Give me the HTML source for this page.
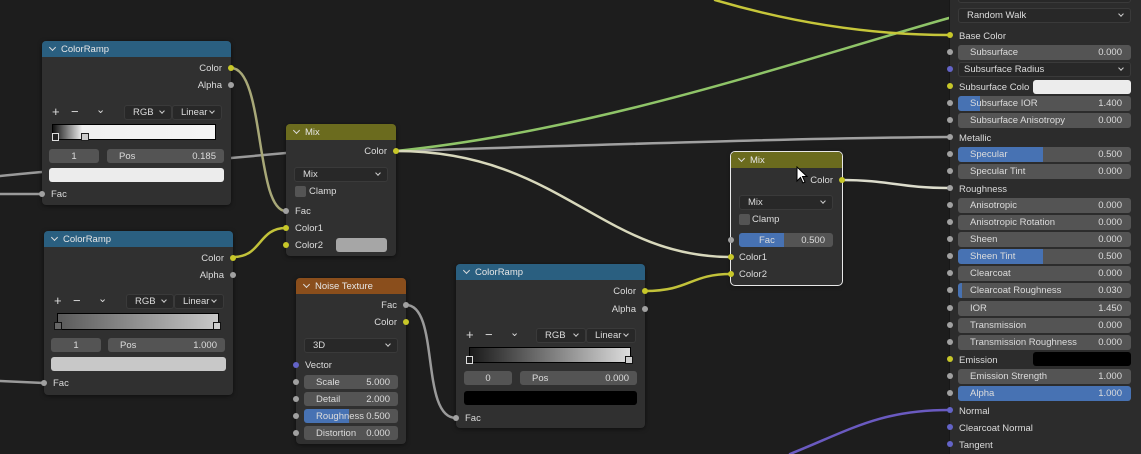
<!DOCTYPE html>
<html><head><meta charset="utf-8"><style>
*{margin:0;padding:0;box-sizing:border-box}
body{width:1141px;height:454px;background:#1d1d1d;position:relative;overflow:hidden;font-family:"Liberation Sans","DejaVu Sans",sans-serif;font-size:9.5px;color:#dcdcdc}
.n{position:absolute;background:#303030;border-radius:4px;box-shadow:0 1px 4px rgba(0,0,0,.5)}
.n>*{position:absolute}
.h{left:0;top:0;right:0;height:16px;border-radius:4px 4px 0 0;line-height:17px;padding-left:19px;color:#e6e6e6}
.h:before{content:"";position:absolute;left:8px;top:4px;width:4px;height:4px;border-right:1.2px solid #ddd;border-bottom:1.2px solid #ddd;transform:rotate(45deg)}
.cr{background:#2a5f80}.mx{background:#6b6b1e}.nz{background:#8a4e1c}
.l{line-height:14px;white-space:nowrap}
.r{text-align:right}
.s{width:6px;height:6px;border-radius:50%;background:#a1a1a1}
.y{background:#c7c729}.p{background:#6363c7}
.f{background:#545454;border-radius:3px;height:14px;line-height:15px;white-space:nowrap;overflow:hidden}
.d{background:#282828;border:1px solid #3a3a3a;border-radius:3px;height:15px;line-height:14px;padding-left:8px}
.d:after{content:"";position:absolute;right:7px;top:3px;width:3px;height:3px;border-right:1px solid #ccc;border-bottom:1px solid #ccc;transform:rotate(45deg)}
.cb{width:11px;height:11px;background:#545454;border-radius:2px}
.pf{position:absolute;left:958px;width:173px;height:15px;background:#545454;border-radius:3px;line-height:16px;padding:0 9px 0 12px;white-space:nowrap;overflow:hidden}
.pf b{font-weight:normal;float:right;position:relative}
.pf span{position:relative}
.pf i{position:absolute;left:0;top:0;bottom:0;background:#4772b3}
.pl{position:absolute;left:959px;line-height:14px}
.ps{position:absolute;left:947px;width:6px;height:6px;border-radius:50%;background:#a1a1a1}
.pm{font-size:13px}
.ch{font-size:11px}
</style></head><body>

<svg width="1141" height="454" style="position:absolute;left:0;top:0" fill="none" stroke-linecap="round">
<path d="M0 176 C20 174 30 173 42 172" stroke="#9a9a9a" stroke-width="2.5"/>
<path d="M0 194 L42 194" stroke="#9a9a9a" stroke-width="2.5"/>
<path d="M0 381 L44 383" stroke="#9a9a9a" stroke-width="2.5"/>
<path d="M231 158 L286 153" stroke="#9a9a9a" stroke-width="2.5"/>
<path d="M231 68 C265 68 255 211 286 211" stroke="#a8a878" stroke-width="2.5"/>
<path d="M233 257 C262 257 258 228 286 228" stroke="#c2c23a" stroke-width="2.5"/>
<path d="M396 151 C600 145 800 138 949 137" stroke="#a0a0a0" stroke-width="2.5"/>
<path d="M396 151 C600 130 800 60 949 18" stroke="#8fc468" stroke-width="2.5"/>
<path d="M715 0 C800 25 880 35 949 35" stroke="#c6c63a" stroke-width="2.5"/>
<path d="M396 151 C560 151 600 257 731 257" stroke="#d8d8bc" stroke-width="2.5"/>
<path d="M841 180 C890 180 900 188 949 188" stroke="#dcdccc" stroke-width="2.5"/>
<path d="M645 291 C690 291 690 274 731 274" stroke="#c2c23a" stroke-width="2.5"/>
<path d="M406 305 C440 305 420 418 456 418" stroke="#9a9a9a" stroke-width="2.5"/>
<path d="M790 454 C850 430 880 410 949 410" stroke="#6a5ac0" stroke-width="2.5"/>
</svg>

<!-- ColorRamp 1 -->
<div class="n" style="left:42px;top:41px;width:189px;height:164px">
<div class="h cr">ColorRamp</div>
<div class="l r" style="right:9px;top:21px">Color</div><div class="s y" style="right:-3px;top:24px"></div>
<div class="l r" style="right:9px;top:38px">Alpha</div><div class="s" style="right:-3px;top:41px"></div>
<div class="l pm" style="left:10px;top:64px">+</div><div class="l pm" style="left:29px;top:64px">−</div><div class="l ch" style="left:54px;top:62px">⌄</div>
<div class="d" style="left:82px;top:64px;width:48px">RGB</div><div class="d" style="left:130px;top:64px;width:50px">Linear</div>
<div style="left:10px;top:83px;width:164px;height:16px;border:1px solid #000;background:linear-gradient(90deg,#111 0%,#f0f0f0 18%,#f4f4f4 100%)"></div>
<div style="left:10px;top:92px;width:7px;height:8px;background:#222;border:1px solid #ddd"></div>
<div style="left:39px;top:92px;width:8px;height:8px;background:#ccc;border:1px solid #222"></div>
<div class="f" style="left:7px;top:108px;width:50px;text-align:center">1</div>
<div class="f" style="left:65px;top:108px;width:117px;padding:0 8px 0 12px">Pos<span style="float:right">0.185</span></div>
<div class="f" style="left:7px;top:127px;width:175px;background:#ececec"></div>
<div class="s" style="left:-3px;top:150px"></div><div class="l" style="left:9px;top:147px">Fac</div>
</div>

<!-- ColorRamp 2 -->
<div class="n" style="left:44px;top:231px;width:189px;height:164px">
<div class="h cr">ColorRamp</div>
<div class="l r" style="right:9px;top:21px">Color</div><div class="s y" style="right:-3px;top:24px"></div>
<div class="l r" style="right:9px;top:38px">Alpha</div><div class="s" style="right:-3px;top:41px"></div>
<div class="l pm" style="left:10px;top:63px">+</div><div class="l pm" style="left:29px;top:63px">−</div><div class="l ch" style="left:54px;top:61px">⌄</div>
<div class="d" style="left:82px;top:63px;width:48px">RGB</div><div class="d" style="left:130px;top:63px;width:50px">Linear</div>
<div style="left:13px;top:82px;width:162px;height:17px;border:1px solid #000;background:linear-gradient(90deg,#5a5a5a,#c8c8c8)"></div>
<div style="left:10px;top:91px;width:8px;height:8px;background:#666;border:1px solid #111"></div>
<div style="left:169px;top:91px;width:8px;height:8px;background:#ccc;border:1px solid #111"></div>
<div class="f" style="left:7px;top:107px;width:50px;text-align:center">1</div>
<div class="f" style="left:64px;top:107px;width:117px;padding:0 8px 0 12px">Pos<span style="float:right">1.000</span></div>
<div class="f" style="left:7px;top:126px;width:175px;background:#c8c8c8"></div>
<div class="s" style="left:-3px;top:149px"></div><div class="l" style="left:9px;top:146px">Fac</div>
</div>

<!-- ColorRamp 3 -->
<div class="n" style="left:456px;top:264px;width:189px;height:164px">
<div class="h cr">ColorRamp</div>
<div class="l r" style="right:9px;top:21px">Color</div><div class="s y" style="right:-3px;top:24px"></div>
<div class="l r" style="right:9px;top:39px">Alpha</div><div class="s" style="right:-3px;top:42px"></div>
<div class="l pm" style="left:10px;top:64px">+</div><div class="l pm" style="left:29px;top:64px">−</div><div class="l ch" style="left:54px;top:62px">⌄</div>
<div class="d" style="left:80px;top:64px;width:50px">RGB</div><div class="d" style="left:130px;top:64px;width:50px">Linear</div>
<div style="left:13px;top:83px;width:162px;height:16px;border:1px solid #000;background:linear-gradient(90deg,#1a1a1a,#dcdcdc)"></div>
<div style="left:10px;top:92px;width:7px;height:8px;background:#222;border:1px solid #ddd"></div>
<div style="left:169px;top:92px;width:8px;height:8px;background:#ccc;border:1px solid #111"></div>
<div class="f" style="left:8px;top:107px;width:48px;text-align:center">0</div>
<div class="f" style="left:64px;top:107px;width:117px;padding:0 8px 0 12px">Pos<span style="float:right">0.000</span></div>
<div class="f" style="left:8px;top:127px;width:173px;background:#000"></div>
<div class="s" style="left:-3px;top:151px"></div><div class="l" style="left:9px;top:148px">Fac</div>
</div>

<!-- Mix 1 -->
<div class="n" style="left:286px;top:124px;width:110px;height:132px">
<div class="h mx">Mix</div>
<div class="l r" style="right:9px;top:21px">Color</div><div class="s y" style="right:-3px;top:24px"></div>
<div class="d" style="left:8px;top:43px;width:94px">Mix</div>
<div class="cb" style="left:9px;top:62px"></div><div class="l" style="left:23px;top:61px">Clamp</div>
<div class="s" style="left:-3px;top:84px"></div><div class="l" style="left:9px;top:81px">Fac</div>
<div class="s y" style="left:-3px;top:101px"></div><div class="l" style="left:9px;top:98px">Color1</div>
<div class="s y" style="left:-3px;top:118px"></div><div class="l" style="left:9px;top:115px">Color2</div>
<div class="f" style="left:50px;top:114px;width:51px;background:#a6a6a6"></div>
</div>

<!-- Noise -->
<div class="n" style="left:296px;top:278px;width:110px;height:166px">
<div class="h nz">Noise Texture</div>
<div class="l r" style="right:9px;top:21px">Fac</div><div class="s" style="right:-3px;top:24px"></div>
<div class="l r" style="right:9px;top:38px">Color</div><div class="s y" style="right:-3px;top:41px"></div>
<div class="d" style="left:8px;top:60px;width:94px">3D</div>
<div class="s p" style="left:-3px;top:84px"></div><div class="l" style="left:9px;top:81px">Vector</div>
<div class="s" style="left:-3px;top:101px"></div><div class="f" style="left:8px;top:97px;width:94px;padding:0 8px 0 12px">Scale<span style="float:right">5.000</span></div>
<div class="s" style="left:-3px;top:118px"></div><div class="f" style="left:8px;top:114px;width:94px;padding:0 8px 0 12px">Detail<span style="float:right">2.000</span></div>
<div class="s" style="left:-3px;top:135px"></div><div class="f" style="left:8px;top:131px;width:94px;padding:0 8px 0 12px;background:linear-gradient(90deg,#4772b3 48%,#545454 48%)">Roughness<span style="float:right">0.500</span></div>
<div class="s" style="left:-3px;top:152px"></div><div class="f" style="left:8px;top:148px;width:94px;padding:0 8px 0 12px">Distortion<span style="float:right">0.000</span></div>
</div>

<!-- Mix 2 -->
<div class="n" style="left:731px;top:152px;width:111px;height:133px;outline:1px solid #e8e8e8">
<div class="h mx">Mix</div>
<div class="l r" style="right:9px;top:22px">Color</div><div class="s y" style="right:-3px;top:25px"></div>
<div class="d" style="left:8px;top:43px;width:94px">Mix</div>
<div class="cb" style="left:8px;top:62px"></div><div class="l" style="left:21px;top:61px">Clamp</div>
<div class="s" style="left:-3px;top:85px"></div><div class="f" style="left:8px;top:81px;width:94px;padding:0 8px 0 20px;background:linear-gradient(90deg,#4772b3 48%,#545454 48%)">Fac<span style="float:right">0.500</span></div>
<div class="s y" style="left:-3px;top:102px"></div><div class="l" style="left:8px;top:99px">Color1</div>
<div class="s y" style="left:-3px;top:119px"></div><div class="l" style="left:8px;top:116px">Color2</div>
</div>
<svg width="14" height="20" style="position:absolute;left:796px;top:166px"><path d="M1 1 L1 15 L4.5 11.5 L7 17 L9 16 L6.5 10.5 L11 10.5 Z" fill="#fff" stroke="#000" stroke-width="1"/></svg>

<!-- Principled panel -->
<div style="position:absolute;left:949px;top:0;width:192px;height:454px;background:#2c2c2c;border-left:1px solid #181818"></div>
<div style="position:absolute;left:958px;top:-6px;width:173px;height:9px;background:#282828;border:1px solid #3a3a3a;border-radius:3px"></div>
<div class="d" style="position:absolute;left:958px;top:8px;width:173px">Random Walk</div>

<div class="ps y" style="top:32px;background:#c7c729"></div><div class="pl" style="top:30px">Base Color</div>
<div class="ps" style="top:49px"></div><div class="pf" style="top:45px"><span>Subsurface</span><b>0.000</b></div>
<div class="ps" style="top:66px;background:#6363c7"></div><div class="d" style="position:absolute;left:958px;top:62px;width:173px;padding-left:5px">Subsurface Radius</div>
<div class="ps" style="top:83px;background:#c7c729"></div><div class="pl" style="top:81px">Subsurface Colo</div><div style="position:absolute;left:1033px;top:80px;width:98px;height:14px;background:#ececec;border-radius:3px"></div>
<div class="ps" style="top:100px"></div><div class="pf" style="top:96px"><i style="width:22px;border-radius:3px 0 0 3px"></i><span>Subsurface IOR</span><b>1.400</b></div>
<div class="ps" style="top:117px"></div><div class="pf" style="top:113px"><span>Subsurface Anisotropy</span><b>0.000</b></div>
<div class="ps" style="top:134px"></div><div class="pl" style="top:132px">Metallic</div>
<div class="ps" style="top:151px"></div><div class="pf" style="top:147px"><i style="width:85px;border-radius:3px 0 0 3px"></i><span>Specular</span><b>0.500</b></div>
<div class="ps" style="top:168px"></div><div class="pf" style="top:164px"><span>Specular Tint</span><b>0.000</b></div>
<div class="ps" style="top:185px"></div><div class="pl" style="top:183px">Roughness</div>
<div class="ps" style="top:202px"></div><div class="pf" style="top:198px"><span>Anisotropic</span><b>0.000</b></div>
<div class="ps" style="top:219px"></div><div class="pf" style="top:215px"><span>Anisotropic Rotation</span><b>0.000</b></div>
<div class="ps" style="top:236px"></div><div class="pf" style="top:232px"><span>Sheen</span><b>0.000</b></div>
<div class="ps" style="top:253px"></div><div class="pf" style="top:249px"><i style="width:85px;border-radius:3px 0 0 3px"></i><span>Sheen Tint</span><b>0.500</b></div>
<div class="ps" style="top:270px"></div><div class="pf" style="top:266px"><span>Clearcoat</span><b>0.000</b></div>
<div class="ps" style="top:287px"></div><div class="pf" style="top:283px"><i style="width:4px;border-radius:3px 0 0 3px"></i><span>Clearcoat Roughness</span><b>0.030</b></div>
<div class="ps" style="top:305px"></div><div class="pf" style="top:301px"><span>IOR</span><b>1.450</b></div>
<div class="ps" style="top:322px"></div><div class="pf" style="top:318px"><span>Transmission</span><b>0.000</b></div>
<div class="ps" style="top:339px"></div><div class="pf" style="top:335px"><span>Transmission Roughness</span><b>0.000</b></div>
<div class="ps" style="top:356px;background:#c7c729"></div><div class="pl" style="top:354px">Emission</div><div style="position:absolute;left:1033px;top:352px;width:98px;height:14px;background:#000;border-radius:3px"></div>
<div class="ps" style="top:373px"></div><div class="pf" style="top:369px"><span>Emission Strength</span><b>1.000</b></div>
<div class="ps" style="top:390px"></div><div class="pf" style="top:386px"><i style="width:173px;border-radius:3px"></i><span>Alpha</span><b>1.000</b></div>
<div class="ps" style="top:407px;background:#6363c7"></div><div class="pl" style="top:405px">Normal</div>
<div class="ps" style="top:424px;background:#6363c7"></div><div class="pl" style="top:422px">Clearcoat Normal</div>
<div class="ps" style="top:441px;background:#6363c7"></div><div class="pl" style="top:439px">Tangent</div>
</body></html>
